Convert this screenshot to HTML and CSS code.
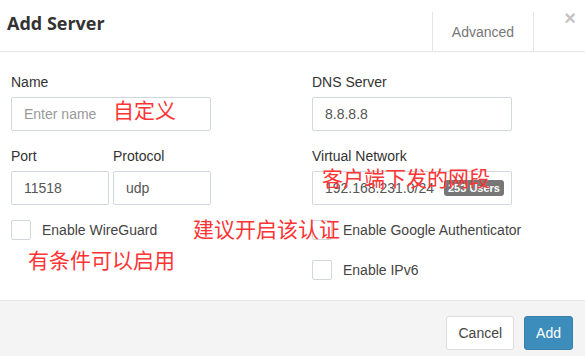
FILE: index.html
```html
<!DOCTYPE html>
<html lang="en">
<head>
    <meta charset="UTF-8">
    <meta name="viewport" content="width=device-width, initial-scale=1.0">
    <title>Add Server</title>
    <link rel="stylesheet" href="styles.css">
</head>
<body>

    <div class="modal">
        <!-- Header -->
        <div class="modal-header">
            <h4 class="modal-title">Add Server</h4>
            <div class="header-tab">Advanced</div>
            <div class="close">&times;</div>
        </div>

        <!-- Body -->
        <div class="modal-body">
            <div class="col">
                <div class="form-group">
                    <label>Name</label>
                    <input class="form-control" type="text" placeholder="Enter name">
                </div>
                <div class="form-row">
                    <div class="form-group">
                        <label>Port</label>
                        <input class="form-control" type="text" value="11518">
                    </div>
                    <div class="form-group">
                        <label>Protocol</label>
                        <input class="form-control" type="text" value="udp">
                    </div>
                </div>
                <div class="checkbox"><span class="box"></span>Enable WireGuard</div>
            </div>

            <div class="col">
                <div class="form-group">
                    <label>DNS Server</label>
                    <input class="form-control" type="text" value="8.8.8.8">
                </div>
                <div class="form-group">
                    <label>Virtual Network</label>
                    <div class="form-control network">
                        <span>192.168.231.0/24</span>
                        <span class="badge">253 Users</span>
                    </div>
                </div>
                <div class="checkbox"><span class="box"></span>Enable Google Authenticator</div>
                <div class="checkbox"><span class="box"></span>Enable IPv6</div>
            </div>
        </div>

        <!-- Footer -->
        <div class="modal-footer">
            <button class="btn btn-default">Cancel</button>
            <button class="btn btn-primary">Add</button>
        </div>

        <!-- Annotations -->
        <span class="note note-name">自定义</span>
        <span class="note note-network">客户端下发的网段</span>
        <span class="note note-auth">建议开启该认证</span>
        <span class="note note-wg">有条件可以启用</span>
    </div>

</body>
</html>
```

FILE: styles.css
```css
* {
    margin: 0;
    padding: 0;
    box-sizing: border-box;
}

body {
    font-family: 'Liberation Sans', Arial, sans-serif;
    font-size: 14px;
    color: #333;
    background-color: #fff;
}

.modal {
    position: relative;
    width: 585px;
    height: 356px;
    overflow: hidden;
}

/* Header */
.modal-header {
    display: flex;
    height: 52px;
    border-bottom: 1px solid #e5e5e5;
}

.modal-title {
    flex: 1;
    margin-top: 11px;
    padding-left: 7px;
    font-family: 'Open Sans', sans-serif;
    font-size: 18px;
    font-weight: 700;
    line-height: 24px;
    color: #333;
}

.header-tab {
    display: flex;
    align-items: center;
    justify-content: center;
    width: 102px;
    margin-top: 12px;
    border-left: 1px solid #e5e5e5;
    border-right: 1px solid #e5e5e5;
    color: #777;
}

.close {
    width: 51px;
    padding: 6px 0 0 21px;
    text-align: center;
    font-size: 20px;
    font-weight: 700;
    line-height: 24px;
    color: #c4c4c4;
}

/* Body */
.modal-body {
    display: flex;
    gap: 101px;
    height: 248px;
    padding: 20px 11px;
}

.col {
    display: flex;
    flex-direction: column;
    gap: 15px;
    width: 200px;
}

.form-row {
    display: grid;
    grid-template-columns: 98px 98px;
    gap: 4px;
}

.form-group label {
    display: block;
    margin-bottom: 5px;
    line-height: 20px;
    color: #333;
}

.form-control {
    display: block;
    width: 100%;
    height: 34px;
    padding: 0 12px;
    border: 1px solid #d2d6de;
    border-radius: 2px;
    font-family: inherit;
    font-size: 14px;
    color: #555;
    background: #fff;
    outline: none;
}

.form-control::placeholder {
    color: #999;
}

.network {
    display: flex;
    align-items: center;
    gap: 10px;
    white-space: nowrap;
}

.badge {
    flex-shrink: 0;
    padding: 2px 4px;
    border-radius: 3px;
    background-color: #777;
    color: #fff;
    font-size: 11px;
    font-weight: 700;
    line-height: 12px;
}

.checkbox {
    display: flex;
    align-items: center;
    gap: 11px;
    height: 20px;
    color: #444;
    white-space: nowrap;
}

.checkbox + .checkbox {
    margin-top: 5px;
}

.checkbox .box {
    flex-shrink: 0;
    width: 20px;
    height: 20px;
    border: 1px solid #d2d6de;
    border-radius: 2px;
}

/* Footer */
.modal-footer {
    display: flex;
    justify-content: flex-end;
    gap: 10px;
    height: 56px;
    padding: 15px 12px 0;
    border-top: 1px solid #e5e5e5;
    background-color: #f4f4f4;
}

.btn {
    height: 34px;
    padding: 0 11px;
    border: 1px solid #ddd;
    border-radius: 3px;
    font-family: inherit;
    font-size: 14px;
}

.btn-default {
    background-color: #fff;
    color: #444;
}

.btn-primary {
    background-color: #3c8dbc;
    border-color: #367fa9;
    color: #fff;
}

/* Red annotations over the form */
.note {
    position: absolute;
    font-family: 'Noto Sans CJK SC', sans-serif;
    font-size: 21px;
    line-height: 21px;
    color: #ff3434;
    white-space: nowrap;
}

.note-name { left: 113px; top: 99px; }
.note-network { left: 322px; top: 167px; }
.note-auth { left: 193px; top: 218px; }
.note-wg { left: 28px; top: 249px; }
```
